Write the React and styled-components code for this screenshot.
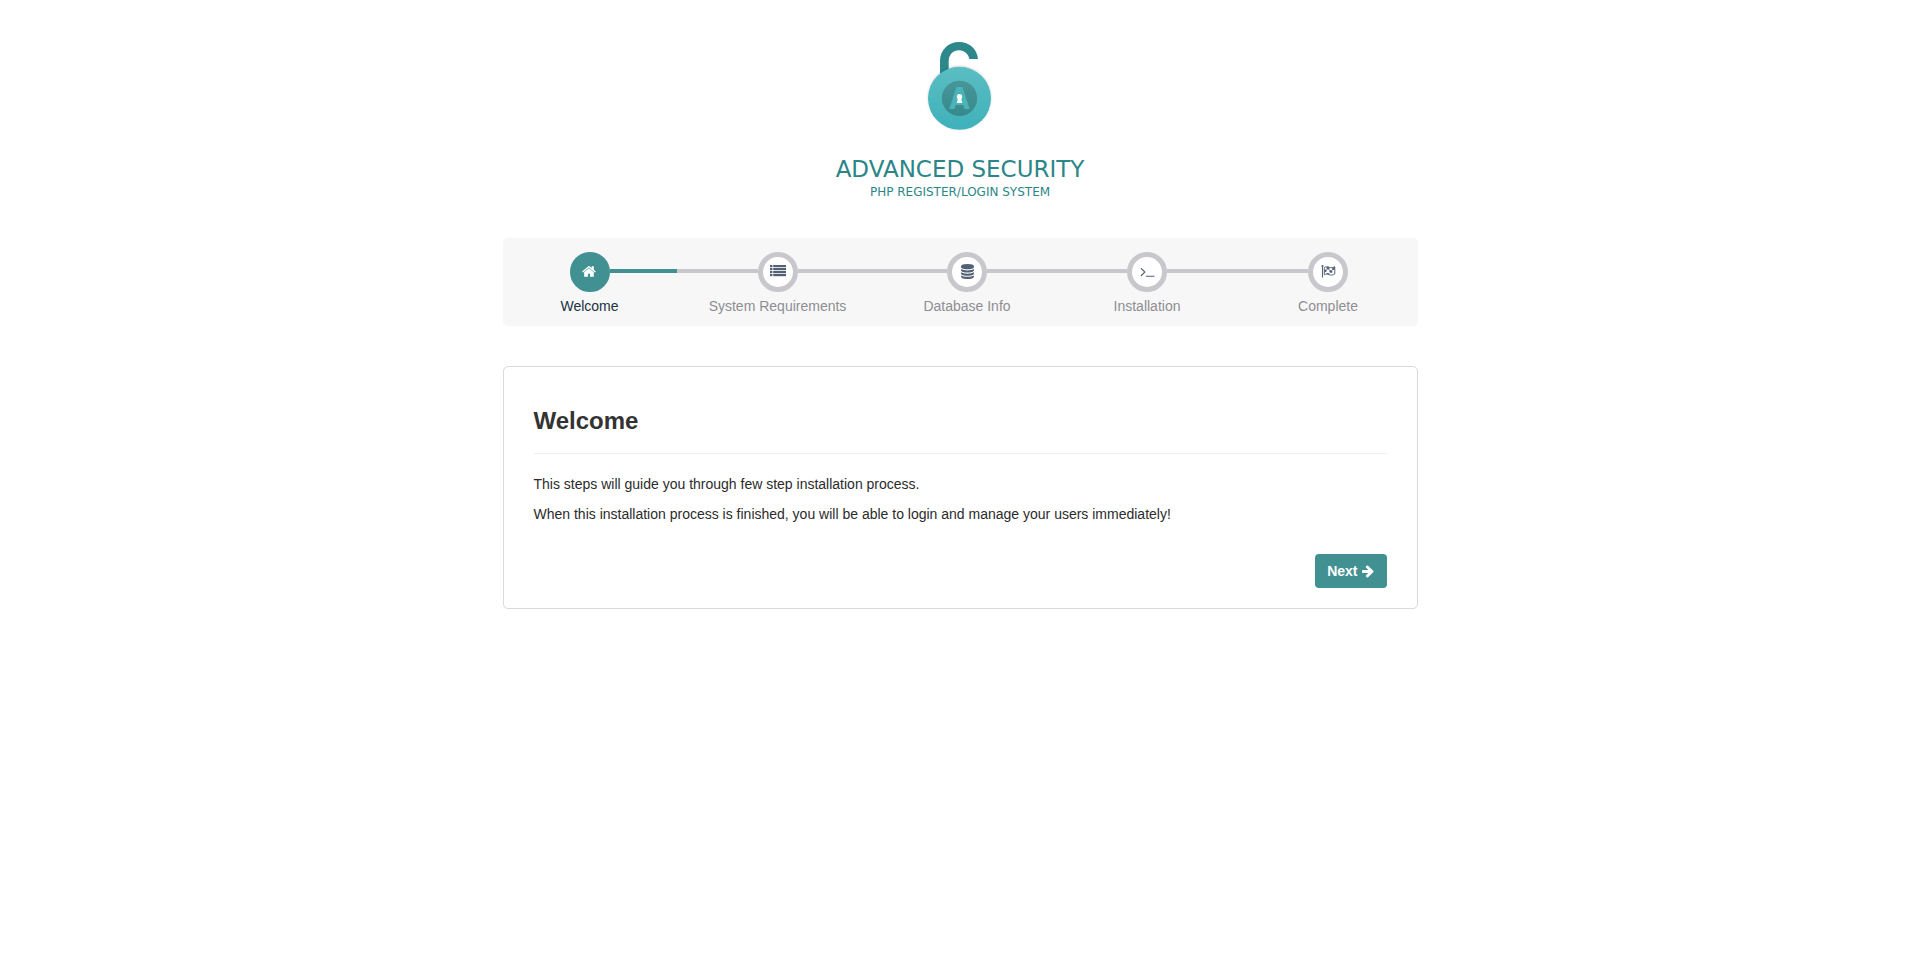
import React from "react";
import styled, { createGlobalStyle } from "styled-components";

const GlobalStyle = createGlobalStyle`
  * {
    box-sizing: border-box;
  }

  body {
    margin: 0;
    background-color: #fff;
    color: #2b2b2b;
    font-family: "Liberation Sans", Arial, sans-serif;
    font-size: 14px;
    line-height: 20px;
  }
`;

const Container = styled.div`
  max-width: 915px;
  margin: 0 auto;
`;

const Brand = styled.header`
  display: flex;
  flex-direction: column;
  align-items: center;
  padding-top: 30px;
  margin-bottom: 38px;
  color: #2b8688;
  font-family: "DejaVu Sans", sans-serif;
`;

const BrandName = styled.h1`
  margin: 14px 0 0;
  font-size: 23px;
  font-weight: 400;
  line-height: 30px;
`;

const BrandTagline = styled.p`
  margin: 0;
  font-size: 12px;
  line-height: 16px;
`;

const Steps = styled.ol`
  display: grid;
  grid-template-columns: 174fr 202fr 177fr 183fr 179fr;
  margin: 0 0 40px;
  padding: 14px 0 10px;
  list-style: none;
  background-color: #f7f7f7;
  border-radius: 5px;
`;

const Step = styled.li`
  text-align: center;
  color: ${(props) => (props.$active ? "#22313f" : "#8e8e93")};
`;

const Track = styled.div`
  display: flex;
  margin-bottom: 4px;
`;

const Line = styled.span`
  flex: 1;
  height: 4px;
  margin-top: 17px;
  background-color: ${(props) => props.$color};
`;

const Circle = styled.span`
  display: flex;
  align-items: flex-start;
  justify-content: center;
  width: 40px;
  height: 40px;
  padding-top: 7px;
  border: 5px solid ${(props) => (props.$active ? "#419193" : "#c8c7cc")};
  border-radius: 50%;
  background-color: ${(props) => (props.$active ? "#419193" : "#fff")};
  color: ${(props) => (props.$active ? "#fff" : "#526173")};
`;

const Icon = styled.svg`
  width: ${(props) => props.$size}px;
  height: ${(props) => props.$size}px;
  fill: currentColor;
`;

const Panel = styled.main`
  padding: 20px 30px;
  border: 1px solid #d9dadb;
  border-radius: 5px;
`;

const Title = styled.h2`
  margin: 21px 0 19px;
  font-size: 24px;
  font-weight: bold;
  line-height: 26px;
  color: #333;
`;

const Divider = styled.hr`
  margin: 0 0 20px;
  border: 0;
  border-top: 1px solid #eee;
`;

const Text = styled.p`
  margin: 0 0 10px;
`;

const Actions = styled.div`
  display: flex;
  justify-content: flex-end;
  margin-top: 30px;
`;

const Button = styled.button`
  display: flex;
  align-items: center;
  gap: 3px;
  height: 34px;
  padding: 0 12px;
  border: 0;
  border-radius: 4px;
  background-color: #419193;
  color: #fff;
  font: bold 14px/20px "Liberation Sans", Arial, sans-serif;
  cursor: pointer;
`;

function HomeIcon() {
  return (
    <Icon $size={15} viewBox="0 0 1792 1792">
      <path d="M1408 992v480q0 26-19 45t-45 19h-384v-384h-256v384h-384q-26 0-45-19t-19-45v-480q0-1 .5-3t.5-3l575-474 575 474q1 2 1 6zm223-69l-62 74q-8 9-21 11h-3q-13 0-21-7l-692-577-692 577q-12 8-24 7-13-2-21-11l-62-74q-8-10-7-23.5t11-21.5l719-599q32-26 76-26t76 26l244 204v-195q0-14 9-23t23-9h192q14 0 23 9t9 23v408l219 182q10 8 11 21.5t-7 23.5z" />
    </Icon>
  );
}

function ListIcon() {
  return (
    <Icon $size={16} viewBox="0 0 16 16">
      {[1, 4, 7, 10].map((y) => (
        <g key={y}>
          <rect x="0" y={y} width="2.4" height="2.2" />
          <rect x="3.2" y={y} width="12.8" height="2.2" />
        </g>
      ))}
    </Icon>
  );
}

function DatabaseIcon() {
  return (
    <Icon $size={15} viewBox="0 0 1792 1792">
      <path d="M896 768q237 0 443-43t325-127v170q0 69-103 128t-280 93.5-385 34.5-385-34.5-280-93.5-103-128v-170q119 84 325 127t443 43zm0 768q237 0 443-43t325-127v170q0 69-103 128t-280 93.5-385 34.5-385-34.5-280-93.5-103-128v-170q119 84 325 127t443 43zm0-384q237 0 443-43t325-127v170q0 69-103 128t-280 93.5-385 34.5-385-34.5-280-93.5-103-128v-170q119 84 325 127t443 43zm0-1152q208 0 385 34.5t280 93.5 103 128v128q0 69-103 128t-280 93.5-385 34.5-385-34.5-280-93.5-103-128v-128q0-69 103-128t280-93.5 385-34.5z" />
    </Icon>
  );
}

function TerminalIcon() {
  return (
    <Icon $size={15} viewBox="0 0 1792 1792">
      <path d="M649 983l-466 466q-10 10-23 10t-23-10l-50-50q-10-10-10-23t10-23l393-393-393-393q-10-10-10-23t10-23l50-50q10-10 23-10t23 10l466 466q10 10 10 23t-10 23zm1079 457v64q0 14-9 23t-23 9h-960q-14 0-23-9t-9-23v-64q0-14 9-23t23-9h960q14 0 23 9t9 23z" />
    </Icon>
  );
}

function FlagIcon() {
  return (
    <Icon $size={15} viewBox="0 0 16 16">
      <circle cx="1.6" cy="2.2" r="1.2" />
      <rect x="1" y="2" width="1.1" height="12.6" rx="0.4" />
      <path
        d="M3.5 3.8C5.2 2.8 6.8 2.6 8.8 3.5C10.9 4.500 12.800 3.800 14.700 2.900V10.700C12.700 11.700 10.900 12.300 8.800 11.300C6.700 10.300 5.200 10.600 3.500 11.600Z"
        fill="none"
        stroke="currentColor"
      />
      <path d="M6 2.900L9 3.500V6L6 5.500ZM12 4L14.700 2.900V5.800L12 6.600ZM3.500 6.500L6 5.500V8L3.500 9ZM9 6Q10.500 6.800 12 6.600V9.200Q10.500 9.600 9 8.800ZM6 9.200L9 10V11.400L6 10.600Z" />
    </Icon>
  );
}

function ArrowRightIcon() {
  return (
    <Icon $size={14} viewBox="0 0 1792 1792">
      <path d="M1600 960q0 54-37 91l-651 651q-39 37-91 37-51 0-90-37l-75-75q-38-38-38-91t38-91l293-293h-704q-52 0-84.5-37.500t-32.500-90.500v-128q0-53 32.500-90.500t84.500-37.500h704l-293-294q-38-36-38-90t38-90l75-75q38-38 90-38 53 0 91 38l651 651q37 35 37 90z" />
    </Icon>
  );
}

function Logo() {
  return (
    <svg width="120" height="110" viewBox="0 0 360 330" aria-hidden="true">
      <defs>
        <linearGradient id="body" x1="0" y1="0" x2="0" y2="1">
          <stop offset="0" stopColor="#5bbdc2" />
          <stop offset="1" stopColor="#3eb1ba" />
        </linearGradient>
        <linearGradient id="dial" x1="0" y1="0" x2="0" y2="1">
          <stop offset="0" stopColor="#479699" />
          <stop offset="1" stopColor="#37898c" />
        </linearGradient>
        <filter id="shade" x="-20%" y="-20%" width="140%" height="140%">
          <feDropShadow dx="0" dy="-2" stdDeviation="3" floodColor="#000" floodOpacity="0.18" />
        </filter>
      </defs>
      <path
        d="M120 140V93C120 60 145 36 177 36C208 36 232 58 234 87H208C205 72 193 61 177 61C159 61 146 75 146 93V140Z"
        fill="#2c888b"
      />
      <circle cx="178.500" cy="205" r="94.500" fill="url(#body)" filter="url(#shade)" />
      <circle cx="178.500" cy="205" r="53" fill="url(#dial)" />
      <text
        x="178.500"
        y="237"
        textAnchor="middle"
        fill="#4ab4b8"
        fontFamily="'Liberation Sans Narrow', 'DejaVu Sans Condensed', sans-serif"
        fontSize="88"
        fontWeight="bold"
      >
        A
      </text>
      <circle cx="178.500" cy="200" r="8" fill="#fff" />
      <path d="M174 203H183L187 219H170Z" fill="#fff" />
    </svg>
  );
}

const steps = [
  { label: "Welcome", icon: <HomeIcon /> },
  { label: "System Requirements", icon: <ListIcon /> },
  { label: "Database Info", icon: <DatabaseIcon /> },
  { label: "Installation", icon: <TerminalIcon /> },
  { label: "Complete", icon: <FlagIcon /> },
];

function Wizard({ current }) {
  const lineColor = (index) => (index === current ? "#419193" : "#c8c7cc");

  return (
    <Steps>
      {steps.map((step, index) => (
        <Step key={step.label} $active={index === current}>
          <Track>
            <Line $color={index === 0 ? "transparent" : lineColor(index)} />
            <Circle $active={index === current}>{step.icon}</Circle>
            <Line $color={index === steps.length - 1 ? "transparent" : lineColor(index)} />
          </Track>
          {step.label}
        </Step>
      ))}
    </Steps>
  );
}

export default function App() {
  return (
    <>
      <GlobalStyle />
      <Container>
        <Brand>
          <Logo />
          <BrandName>ADVANCED SECURITY</BrandName>
          <BrandTagline>PHP REGISTER/LOGIN SYSTEM</BrandTagline>
        </Brand>
        <Wizard current={0} />
        <Panel>
          <Title>Welcome</Title>
          <Divider />
          <Text>This steps will guide you through few step installation process.</Text>
          <Text>
            When this installation process is finished, you will be able to login and manage your
            users immediately!
          </Text>
          <Actions>
            <Button type="button">
              Next
              <ArrowRightIcon />
            </Button>
          </Actions>
        </Panel>
      </Container>
    </>
  );
}
